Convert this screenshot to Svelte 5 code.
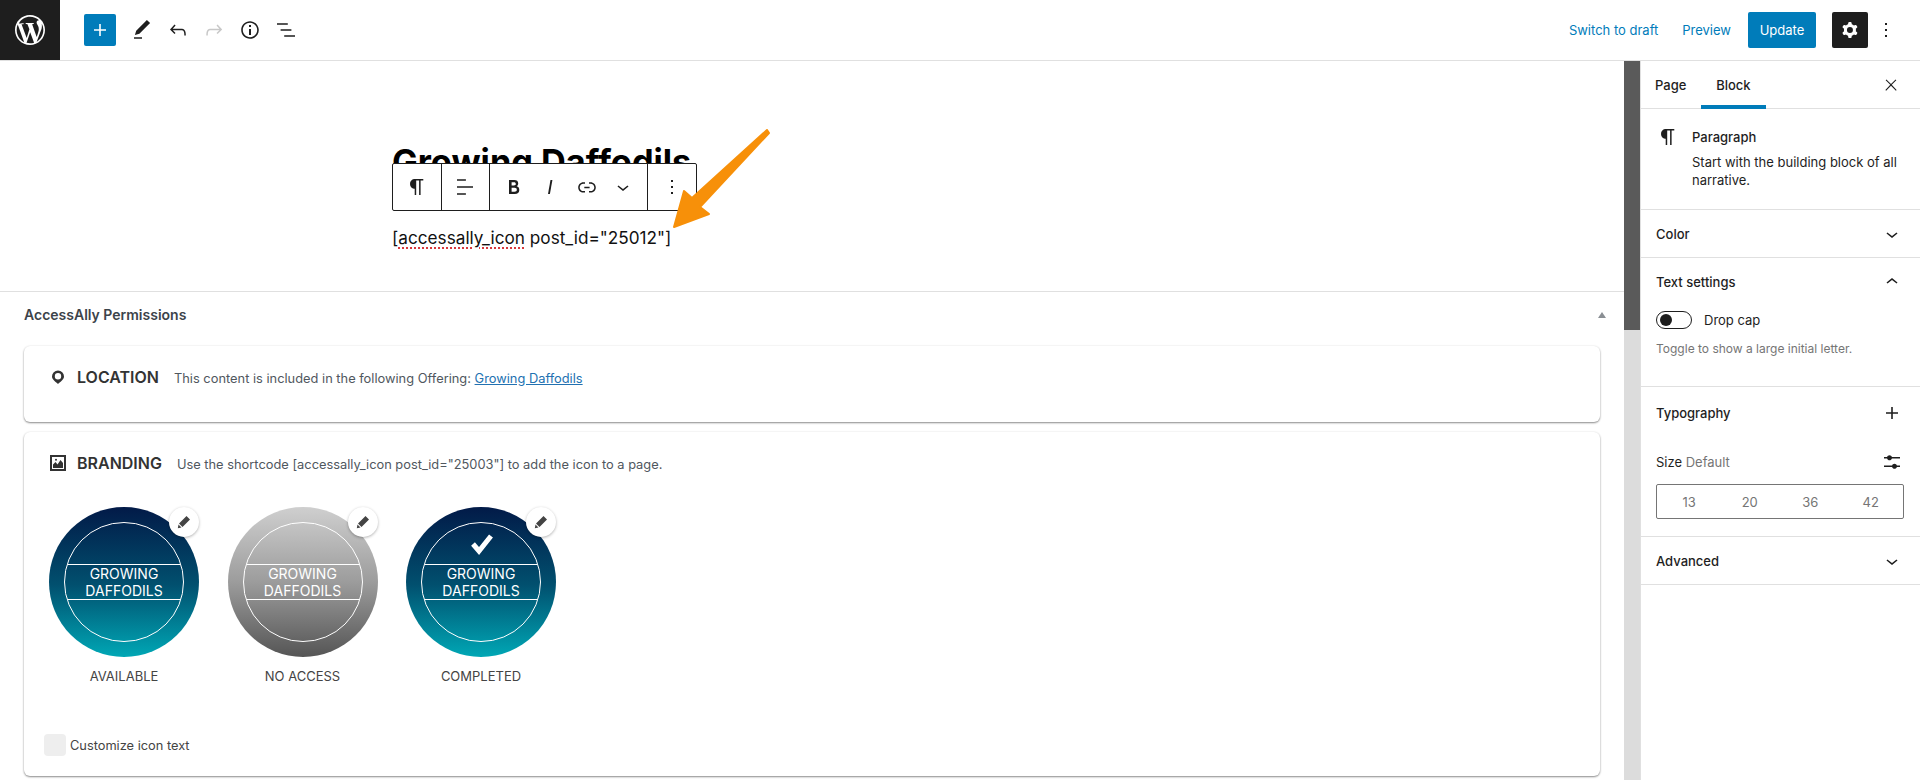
<script>
	const icons = {
		plus: 'M18 11.2h-5.2V6h-1.6v5.2H6v1.6h5.2V18h1.6v-5.2H18z',
		pen: 'M20.1 5.1L16.9 2 6.2 12.7l-1.3 4.4 4.5-1.3L20.1 5.1zM4 20.8h8v-1.5H4v1.5z',
		undo: 'M18.3 11.7c-.6-.6-1.4-.9-2.3-.9H6.7l2.9-3.3-1.1-1-4.5 5L8.5 16l1-1-2.7-2.7H16c.5 0 .9.2 1.3.5 1 1 1 3.4 1 4.5v.3h1.5v-.2c0-1.5 0-4.3-1.5-5.7z',
		redo: 'M15.6 6.5l-1.1 1 2.9 3.3H8c-.9 0-1.7.3-2.3.9-1.4 1.5-1.4 4.2-1.4 5.6v.2h1.5v-.3c0-1.1 0-3.5 1-4.5.3-.3.7-.5 1.3-.5h9.2L14.5 15l1.1 1.1 4.6-4.6-4.6-5z',
		info: 'M12 3.2c-4.8 0-8.8 3.9-8.8 8.8 0 4.8 3.9 8.8 8.8 8.8 4.8 0 8.8-3.9 8.8-8.8 0-4.8-4-8.8-8.8-8.8zm0 16c-4 0-7.2-3.3-7.2-7.2C4.8 8 8 4.8 12 4.8s7.2 3.3 7.2 7.2c0 4-3.2 7.2-7.2 7.2zM11 17h2v-6h-2v6zm0-8h2V7h-2v2z',
		list: 'M13.8 5.2H3v1.5h10.8V5.2zm-3.6 12v1.5H21v-1.5H10.2zm7.2-6H6.6v1.5h10.8v-1.5z',
		cog: 'M10.289 4.836A1 1 0 0111.275 4h1.306a1 1 0 01.987.836l.244 1.466c.787.26 1.503.679 2.108 1.218l1.393-.522a1 1 0 011.216.437l.653 1.13a1 1 0 01-.23 1.273l-1.148.944a6.025 6.025 0 010 2.435l1.149.946a1 1 0 01.23 1.272l-.653 1.13a1 1 0 01-1.216.437l-1.394-.522c-.605.54-1.32.958-2.108 1.218l-.244 1.466a1 1 0 01-.987.836h-1.306a1 1 0 01-.986-.836l-.244-1.466a5.995 5.995 0 01-2.108-1.218l-1.394.522a1 1 0 01-1.217-.436l-.653-1.131a1 1 0 01.23-1.272l1.149-.946a6.026 6.026 0 010-2.435l-1.148-.944a1 1 0 01-.23-1.272l.653-1.131a1 1 0 011.217-.437l1.393.522a5.994 5.994 0 012.108-1.218l.244-1.466zM14.929 12a3 3 0 11-6 0 3 3 0 016 0z',
		more: 'M13 19h-2v-2h2v2zm0-6h-2v-2h2v2zm0-6h-2V5h2v2z',
		para: 'M18.3 4H9.9v-.1l-.9.2c-2.3.4-4 2.4-4 4.8s1.7 4.4 4 4.8l.7.1V20h1.5V5.5h2.9V20h1.5V5.5h2.7V4z',
		align: 'M4 19.8h8.9v-1.5H4v1.5zm8.9-15.6H4v1.5h8.9V4.2zm-8.9 7v1.5h16v-1.5H4z',
		bold: 'M14.7 11.3c1-.6 1.5-1.6 1.5-3 0-2.3-1.3-3.4-4-3.4H7v14h5.8c1.4 0 2.5-.3 3.3-1 .8-.7 1.2-1.7 1.2-2.9.1-1.9-.8-3.1-2.6-3.7zm-5.1-4h2.3c.6 0 1.1.1 1.4.4.3.3.5.7.5 1.2s-.2 1-.5 1.2c-.3.3-.8.4-1.4.4H9.6V7.3zm4.6 9c-.4.3-1 .4-1.7.4H9.6v-3.9h2.9c.7 0 1.3.2 1.7.5.4.3.6.8.6 1.5s-.2 1.2-.6 1.5z',
		italic: 'M12.5 5L10 19h1.9l2.5-14z',
		link: 'M15.6 7.2H14v1.5h1.6c2 0 3.7 1.7 3.7 3.7s-1.7 3.7-3.7 3.7H14v1.5h1.6c2.8 0 5.2-2.3 5.2-5.2 0-2.9-2.3-5.2-5.2-5.2zM4.7 12.4c0-2 1.7-3.7 3.7-3.7H10V7.2H8.4c-2.9 0-5.2 2.3-5.2 5.2 0 2.9 2.3 5.2 5.2 5.2H10v-1.5H8.4c-2 0-3.7-1.7-3.7-3.7zm4.6.9h5.3v-1.5H9.3v1.5z',
		down: 'M17.5 11.6L12 16l-5.5-4.4.9-1.2L12 14l4.5-3.6 1 1.2z',
		up: 'M6.5 12.4L12 8l5.5 4.4-.9 1.2L12 10l-4.5 3.6-1-1.2z',
		close: 'M13 11.8l6.1-6.3-1-1-6.1 6.2-6.1-6.2-1 1 6.1 6.3-6.5 6.7 1 1 6.5-6.6 6.5 6.6 1-1z',
		sliders: 'M14.5 13.8c-1.1 0-2.1.7-2.4 1.8H4V17h8.1c.3 1 1.3 1.8 2.4 1.8s2.1-.7 2.4-1.8H20v-1.5h-3.1c-.3-1-1.3-1.7-2.4-1.7zM11.9 7c-.3-1-1.3-1.8-2.4-1.8S7.4 6 7.1 7H4v1.5h3.1c.3 1 1.3 1.8 2.4 1.8s2.1-.7 2.4-1.8H20V7h-8.1z'
	};

	const badges = [
		{ label: 'AVAILABLE', kind: 'teal', done: false },
		{ label: 'NO ACCESS', kind: 'grey', done: false },
		{ label: 'COMPLETED', kind: 'teal', done: true }
	];

	const sizes = ['13', '20', '36', '42'];
</script>

{#snippet icon(name, size = 24)}
	<svg width={size} height={size} viewBox="0 0 24 24" fill="currentColor" fill-rule="evenodd"><path d={icons[name]} /></svg>
{/snippet}

<div class="page">
	<header class="topbar">
		<div class="left">
			<div class="logo">
				<svg width="30" height="30" viewBox="0 0 20 20" fill="#fff">
					<path d="M20 10c0-5.51-4.49-10-10-10C4.48 0 0 4.49 0 10c0 5.52 4.48 10 10 10 5.51 0 10-4.48 10-10zM7.78 15.37L4.37 6.22c.55-.02 1.17-.08 1.17-.08.5-.06.44-.67-.06-.64 0 0-1.45.11-2.37.11-.18 0-.37 0-.58-.01C4.12 2.69 6.87 1.11 10 1.11c2.33 0 4.45.87 6.05 2.34-.68-.11-1.65.39-1.65 1.58 0 .74.45 1.36.9 2.1.35.61.55 1.36.55 2.46 0 1.49-1.4 5-1.4 5l-3.03-8.37c.54-.02.82-.17.82-.17.5-.05.44-.79-.06-.76 0 0-1.44.12-2.38.12-.87 0-2.33-.12-2.33-.12-.5-.03-.56.73-.06.76l.92.08 1.26 3.41zM17.41 10c.24-.64.74-1.87.43-4.25.7 1.29 1.05 2.71 1.05 4.25 0 3.29-1.73 6.24-4.4 7.78.97-2.59 1.94-5.2 2.92-7.78zM6.1 18.09C3.12 16.65 1.11 13.53 1.11 10c0-1.3.23-2.48.72-3.59C3.25 10.3 4.67 14.2 6.1 18.09zm4.03-6.63l2.58 6.98c-.86.29-1.76.45-2.71.45-.79 0-1.57-.11-2.29-.33.81-2.38 1.62-4.74 2.42-7.1z" />
				</svg>
			</div>
			<div class="tools">
				<span class="add">{@render icon('plus')}</span>
				<span class="tool">{@render icon('pen')}</span>
				<span class="tool">{@render icon('undo')}</span>
				<span class="tool off">{@render icon('redo')}</span>
				<span class="tool">{@render icon('info')}</span>
				<span class="tool">{@render icon('list')}</span>
			</div>
		</div>
		<div class="right">
			<span class="textlink">Switch to draft</span>
			<span class="textlink">Preview</span>
			<span class="update">Update</span>
			<span class="gear">{@render icon('cog')}</span>
			<span class="dots">{@render icon('more')}</span>
		</div>
	</header>

	<div class="body">
		<main class="main">
			<section class="editor">
				<h1 class="title">Growing Daffodils</h1>
				<p class="para">[<span class="typo">accessally_icon</span> post_id="25012"]</p>

				<div class="blocktools">
					<span class="group one">{@render icon('para')}</span>
					<span class="group one">{@render icon('align')}</span>
					<span class="group wide">
						<span class="btn">{@render icon('bold')}</span>
						<span class="btn">{@render icon('italic')}</span>
						<span class="btn">{@render icon('link')}</span>
						<span class="btn">{@render icon('down')}</span>
					</span>
					<span class="group one last">{@render icon('more')}</span>
				</div>

				<!-- orange annotation arrow pasted over the block -->
				<svg class="arrow" width="110" height="110" viewBox="0 0 110 110">
					<path d="M103 1 L28 69 L20 62 L10 98 L45 85 L36 78 L105 4 Z" fill="#f79009" stroke="#f79009" stroke-width="2" stroke-linejoin="round" />
				</svg>
			</section>

			<section class="meta">
				<div class="metahead">
					<h2>AccessAlly Permissions</h2>
					<span class="caret"></span>
				</div>

				<div class="card location">
					<div class="cardhead">
						<svg class="cardicon" width="16" height="16" viewBox="0 0 16 16">
							<path d="M8 1.500a6 6 0 00-6 6c0 3.200 4.200 5.800 6 7.500 1.800-1.700 6-4.300 6-7.500a6 6 0 00-6-6zm0 9a3.200 3.200 0 110-6.400 3.200 3.200 0 010 6.400z" fill="#333" fill-rule="evenodd" />
						</svg>
						<strong>LOCATION</strong>
						<span class="note">This content is included in the following Offering: <a href="#top">Growing Daffodils</a></span>
					</div>
				</div>

				<div class="card branding">
					<div class="cardhead">
						<svg class="cardicon" width="16" height="16" viewBox="0 0 16 16">
							<path d="M0 0h16v16H0zM2 2v12h12V2z" fill="#333" fill-rule="evenodd" />
							<path d="M3 13V9.500l2.500-2.500 2 2.500 3-4.500L13 8v5z" fill="#333" />
							<circle cx="6" cy="4.800" r="1" fill="#333" />
						</svg>
						<strong>BRANDING</strong>
						<span class="note">Use the shortcode [accessally_icon post_id="25003"] to add the icon to a page.</span>
					</div>

					<div class="badges">
						{#each badges as b}
							<div class="badge">
								<div class="disc {b.kind}">
									<div class="ring">
										{#if b.done}
											<svg class="check" width="24" height="22" viewBox="0 0 24 22">
												<path d="M3 11l6 7L21 3" fill="none" stroke="#fff" stroke-width="5" />
											</svg>
										{/if}
										<div class="band">GROWING<br />DAFFODILS</div>
									</div>
									<span class="edit">
										<svg width="14" height="14" viewBox="0 0 14 14">
											<path d="M9.500 1 13 4.500 5.500 12 2 8.500zM1.500 9.500l3 3L.8 13.200z" fill="#444" />
										</svg>
									</span>
								</div>
								<span class="cap">{b.label}</span>
							</div>
						{/each}
					</div>

					<label class="custom">
						<span class="box"></span>
						<span>Customize icon text</span>
					</label>
				</div>
			</section>
		</main>

		<div class="scrollbar"><div class="thumb"></div></div>

		<aside class="sidebar">
			<div class="tabs">
				<span class="tab">Page</span>
				<span class="tab active">Block</span>
				<span class="x">{@render icon('close', 18)}</span>
			</div>

			<div class="panel blockinfo">
				<span class="pilcrow">{@render icon('para')}</span>
				<div>
					<div class="blockname">Paragraph</div>
					<p>Start with the building block of all narrative.</p>
				</div>
			</div>

			<div class="panel row color">
				<span>Color</span>
				{@render icon('down')}
			</div>

			<div class="panel textset">
				<div class="row">
					<span>Text settings</span>
					{@render icon('up')}
				</div>
				<div class="toggle">
					<span class="switch"><i></i></span>
					<span>Drop cap</span>
				</div>
				<p class="help">Toggle to show a large initial letter.</p>
			</div>

			<div class="panel typo-panel">
				<div class="row">
					<span>Typography</span>
					{@render icon('plus')}
				</div>
				<div class="row sizerow">
					<span class="sizelabel">Size <em>Default</em></span>
					{@render icon('sliders')}
				</div>
				<div class="sizes">
					{#each sizes as s}
						<span>{s}</span>
					{/each}
				</div>
			</div>

			<div class="panel row advanced">
				<span>Advanced</span>
				{@render icon('down')}
			</div>
		</aside>
	</div>
</div>

<style>
	:global(body) {
		margin: 0;
		background: #fff;
	}

	.page {
		height: 780px;
		overflow: hidden;
		display: flex;
		flex-direction: column;
		font-family: Inter, 'Noto Sans', sans-serif;
		font-size: 13px;
		color: #1e1e1e;
	}

	.topbar {
		height: 60px;
		flex: none;
		display: flex;
		align-items: center;
		justify-content: space-between;
		border-bottom: 1px solid #e0e0e0;
	}

	.left,
	.right,
	.tools {
		display: flex;
		align-items: center;
	}

	.logo {
		width: 60px;
		height: 60px;
		background: #1e1e1e;
		display: flex;
		align-items: center;
		justify-content: center;
		margin-right: 24px;
	}

	.add {
		width: 32px;
		height: 32px;
		background: #007cba;
		color: #fff;
		border-radius: 2px;
		display: flex;
		align-items: center;
		justify-content: center;
		margin-right: 14px;
	}

	.tool {
		width: 24px;
		height: 24px;
		margin-right: 12px;
		color: #1e1e1e;
	}

	.tool.off {
		color: #c8c8c8;
	}

	.right {
		padding-right: 22px;
	}

	.textlink {
		color: #007cba;
		margin-right: 24px;
	}

	.update {
		width: 68px;
		height: 36px;
		background: #007cba;
		color: #fff;
		border-radius: 2px;
		display: flex;
		align-items: center;
		justify-content: center;
		margin-left: -7px;
		margin-right: 16px;
	}

	.gear {
		width: 36px;
		height: 36px;
		background: #1e1e1e;
		color: #fff;
		border-radius: 2px;
		display: flex;
		align-items: center;
		justify-content: center;
		margin-right: 6px;
	}

	.dots {
		width: 24px;
		height: 24px;
	}

	.body {
		flex: 1;
		display: flex;
		min-height: 0;
	}

	.main {
		flex: 1;
		min-width: 0;
	}

	.editor {
		position: relative;
		height: 231px;
		box-sizing: border-box;
		border-bottom: 1px solid #e0e0e0;
		padding: 79px 0 0 392px;
	}

	.title {
		margin: 0;
		font-size: 34.300px;
		font-weight: 700;
		line-height: 44px;
		color: #000;
	}

	.para {
		margin: 40px 0 0;
		font-size: 17.200px;
		line-height: 28px;
		color: #111;
	}

	.typo {
		text-decoration: underline dotted #d8383d 1.500px;
		text-underline-offset: 3px;
	}

	.blocktools {
		position: absolute;
		left: 392px;
		top: 102px;
		height: 46px;
		display: flex;
		background: #fff;
		border: 1px solid #1e1e1e;
		border-radius: 2px;
	}

	.group {
		display: flex;
		align-items: center;
		justify-content: center;
		border-right: 1px solid #1e1e1e;
	}

	.group.one {
		width: 47.500px;
	}

	.group.wide {
		width: 157px;
	}

	.group.last {
		border-right: 0;
	}

	.btn {
		width: 36.500px;
		display: flex;
		justify-content: center;
	}

	.arrow {
		position: absolute;
		left: 664px;
		top: 68px;
	}

	.meta {
		padding: 0 24px;
	}

	.metahead {
		height: 54px;
		box-sizing: border-box;
		padding-bottom: 9px;
		display: flex;
		align-items: center;
		justify-content: space-between;
	}

	.metahead h2 {
		margin: 0;
		font-size: 14px;
		font-weight: 600;
		color: #3c434a;
	}

	.caret {
		width: 0;
		height: 0;
		border-left: 4px solid transparent;
		border-right: 4px solid transparent;
		border-bottom: 6px solid #8a8f94;
		margin-right: -6px;
	}

	.card {
		background: #fff;
		border-radius: 6px;
		box-shadow: 0 1px 2px rgba(0, 0, 0, 0.45), 0 0 3px rgba(0, 0, 0, 0.05);
		padding: 20px 26px 0;
		margin-bottom: 10px;
	}

	.location {
		height: 76px;
		box-sizing: border-box;
	}

	.branding {
		height: 344px;
		box-sizing: border-box;
	}

	.cardhead {
		display: flex;
		align-items: center;
		height: 22px;
	}

	.cardicon {
		margin-right: 11px;
		flex: none;
	}

	.cardhead strong {
		font-size: 16px;
		font-weight: 600;
		color: #333;
		margin-right: 15px;
	}

	.note {
		font-size: 12.850px;
		color: #50575e;
		margin-top: 2px;
	}

	.note a {
		color: #2271b1;
	}

	.badges {
		display: flex;
		gap: 28.500px;
		margin: 33px 0 0 -1px;
	}

	.badge {
		width: 150px;
		display: flex;
		flex-direction: column;
		align-items: center;
	}

	.disc {
		position: relative;
		width: 150px;
		height: 150px;
		border-radius: 50%;
		display: flex;
		align-items: center;
		justify-content: center;
	}

	.disc.teal {
		background: linear-gradient(180deg, #021a48 0%, #01506f 52%, #00a7b5 100%);
	}

	.disc.grey {
		background: linear-gradient(180deg, #cfcfcf 0%, #9c9c9c 50%, #555 100%);
	}

	.ring {
		position: relative;
		width: 118px;
		height: 118px;
		border: 1px solid #fff;
		border-radius: 50%;
		overflow: hidden;
		display: flex;
		align-items: center;
	}

	.check {
		position: absolute;
		left: 48px;
		top: 10px;
	}

	.band {
		width: 100%;
		height: 34px;
		border-top: 1px solid #fff;
		border-bottom: 1px solid #fff;
		color: #fff;
		font-size: 14px;
		line-height: 17px;
		text-align: center;
	}

	.edit {
		position: absolute;
		right: 0;
		top: 0;
		width: 30px;
		height: 30px;
		background: #fff;
		border-radius: 50%;
		box-shadow: 0 1px 3px rgba(0, 0, 0, 0.3);
		display: flex;
		align-items: center;
		justify-content: center;
	}

	.cap {
		margin-top: 11px;
		font-size: 13px;
		line-height: 16px;
		color: #444;
	}

	.custom {
		display: flex;
		align-items: center;
		gap: 4px;
		margin: 50px 0 0 -6px;
		font-size: 12.800px;
		color: #444;
	}

	.box {
		width: 22px;
		height: 22px;
		background: #eee;
		border-radius: 4px;
	}

	.scrollbar {
		width: 16px;
		flex: none;
		background: #dcdcdc;
	}

	.thumb {
		height: 269px;
		background: #5a5a5a;
	}

	.sidebar {
		width: 280px;
		flex: none;
		box-sizing: border-box;
		border-left: 1px solid #e0e0e0;
	}

	.tabs {
		height: 48px;
		box-sizing: border-box;
		border-bottom: 1px solid #e0e0e0;
		display: flex;
		align-items: stretch;
		padding: 0 20px 0 0;
	}

	.tab {
		display: flex;
		align-items: center;
		justify-content: center;
		padding: 0 15px 0 14px;
		font-weight: 500;
		box-sizing: border-box;
		height: 48px;
	}

	.tab.active {
		border-bottom: 4px solid #007cba;
		padding-top: 4px;
		width: 65px;
		margin-left: 0;
	}

	.x {
		margin-left: auto;
		align-self: center;
		width: 18px;
		height: 18px;
	}

	.panel {
		border-bottom: 1px solid #e0e0e0;
		padding: 0 16px 0 15px;
	}

	.row {
		display: flex;
		align-items: center;
		justify-content: space-between;
		font-weight: 500;
	}

	.blockinfo {
		height: 101px;
		box-sizing: border-box;
		display: flex;
		padding-top: 16px;
	}

	.pilcrow {
		width: 24px;
		height: 24px;
		margin-right: 12px;
	}

	.blockname {
		font-weight: 500;
		margin-bottom: 4px;
		line-height: 24px;
	}

	.blockinfo p {
		margin: 0;
		line-height: 18px;
		color: #1e1e1e;
	}

	.color {
		height: 48px;
		box-sizing: border-box;
	}

	.textset {
		height: 129px;
		box-sizing: border-box;
		padding-top: 12px;
	}

	.toggle {
		display: flex;
		align-items: center;
		gap: 12px;
		margin-top: 17px;
	}

	.switch {
		width: 31px;
		height: 16px;
		border: 1px solid #1e1e1e;
		border-radius: 9px;
		display: flex;
		align-items: center;
		padding-left: 3px;
	}

	.switch i {
		width: 12px;
		height: 12px;
		background: #1e1e1e;
		border-radius: 50%;
	}

	.help {
		margin: 11px 0 0;
		font-size: 12px;
		line-height: 18px;
		color: #757575;
	}

	.typo-panel {
		height: 150px;
		box-sizing: border-box;
		padding-top: 14px;
	}

	.sizerow {
		margin-top: 25px;
		font-weight: 400;
	}

	.sizelabel em {
		font-style: normal;
		color: #757575;
	}

	.sizes {
		margin-top: 10px;
		height: 35px;
		width: 248px;
		box-sizing: border-box;
		border: 1px solid #757575;
		border-radius: 2px;
		padding-left: 2px;
		display: grid;
		grid-template-columns: repeat(4, 60.500px);
		align-items: center;
		justify-items: center;
		color: #757575;
	}

	.advanced {
		height: 48px;
		box-sizing: border-box;
	}
</style>
